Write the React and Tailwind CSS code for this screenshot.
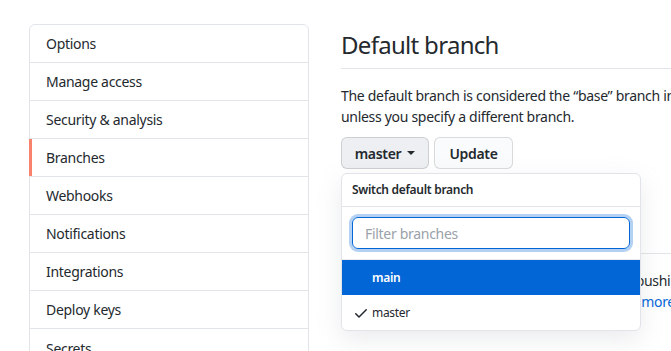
import React from 'react'

const menu = [
  'Options',
  'Manage access',
  'Security & analysis',
  'Branches',
  'Webhooks',
  'Notifications',
  'Integrations',
  'Deploy keys',
  'Secrets',
]

function Check() {
  return (
    <svg width="16" height="16" viewBox="0 0 16 16" fill="#24292e">
      <path
        fillRule="evenodd"
        d="M13.78 4.22a.75.75 0 010 1.06l-7.25 7.25a.75.75 0 01-1.06 0L2.22 9.28a.75.75 0 011.06-1.06L6 10.94l6.72-6.72a.75.75 0 011.06 0z"
      />
    </svg>
  )
}

function BranchMenu() {
  return (
    <div className="absolute left-0 top-[36px] z-10 w-[300px] overflow-hidden rounded-md border border-[#e1e4e8] bg-white shadow-[0_8px_24px_rgba(149,157,165,0.2)]">
      <div className="border-b border-[#e1e4e8] px-[10px] py-2 text-[12px] leading-4 font-semibold text-[#24292e]">
        Switch default branch
      </div>
      <div className="border-b border-[#eaecef] p-[10px]">
        <input
          type="text"
          placeholder="Filter branches"
          className="block h-8 w-full rounded-md border border-[#0366d6] px-3 text-[14px] text-[#24292e] shadow-[0_0_0_3px_rgba(3,102,214,0.3)] outline-none placeholder:text-[#9aa1a9]"
        />
      </div>
      <div className="flex h-[35px] items-center bg-[#0366d6] pl-[30px] text-[12px] font-semibold text-white">
        main
      </div>
      <div className="flex h-[35px] items-center pt-px text-[12px] text-[#24292e]">
        <span className="ml-[11px] mr-[3px] flex w-4 items-center">
          <Check />
        </span>
        master
      </div>
    </div>
  )
}

export default function App() {
  return (
    <div
      className="h-[351px] w-[671px] overflow-hidden bg-white text-[#24292e]"
      style={{ fontFamily: '"Noto Sans", "Open Sans", sans-serif' }}
    >
      <div className="flex pl-[29px] pt-[24px] text-[14px] tracking-[-0.3px]">
        {/* settings menu */}
        <nav className="w-[280px] shrink-0 rounded-t-md border border-[#e1e4e8]">
          {menu.map((item, i) => (
            <div
              key={item}
              className={
                'relative flex h-[38px] items-center pl-4 ' +
                (i < menu.length - 1 ? 'border-b border-[#e1e4e8]' : '')
              }
            >
              {item === 'Branches' && (
                <span className="absolute -left-px top-0 bottom-0 w-[3px] bg-[#f9826c]" />
              )}
              {item}
            </div>
          ))}
        </nav>

        {/* main column */}
        <div className="ml-[32px] w-[640px] shrink-0">
          <div className="border-b border-[#e1e4e8] pt-[6px] pb-2">
            <h2 className="text-[24px] leading-[30px] font-normal tracking-[-0.7px]">Default branch</h2>
          </div>
          <p className="mt-4 mb-[10px] whitespace-nowrap leading-[21px]">
            The default branch is considered the “base” branch in your repository, against which all pull requests
            <br />
            unless you specify a different branch.
          </p>
          <div className="relative flex gap-[5px]">
            <button className="flex h-8 w-[88px] items-center justify-center gap-[6px] rounded-md border border-[rgba(27,31,35,0.15)] bg-[#edeff2] font-semibold">
              master
              <svg width="8" height="4" viewBox="0 0 8 4">
                <path d="M0 0h8L4 4z" fill="#24292e" />
              </svg>
            </button>
            <button className="h-8 w-[79px] rounded-md border border-[rgba(27,31,35,0.15)] bg-[#fafbfc] font-semibold">
              Update
            </button>
            <BranchMenu />
          </div>

          <div className="mt-[46px] border-b border-[#e1e4e8] pb-2">
            <h2 className="text-[24px] leading-[30px] font-normal tracking-[-0.7px]">Branch protection rules</h2>
          </div>
          <p className="mt-4 whitespace-nowrap leading-[21px]">
            Define branch protection rules to disable force pushing, prevent branches from being deleted, and optionally
            require status checks before
            <br />
            <span className="tracking-[-0.4px]">merging. New to branch protection rules? </span>
            <a href="#" className="text-[#0366d6]">
              Learn more
            </a>
            .
          </p>
        </div>
      </div>
    </div>
  )
}
